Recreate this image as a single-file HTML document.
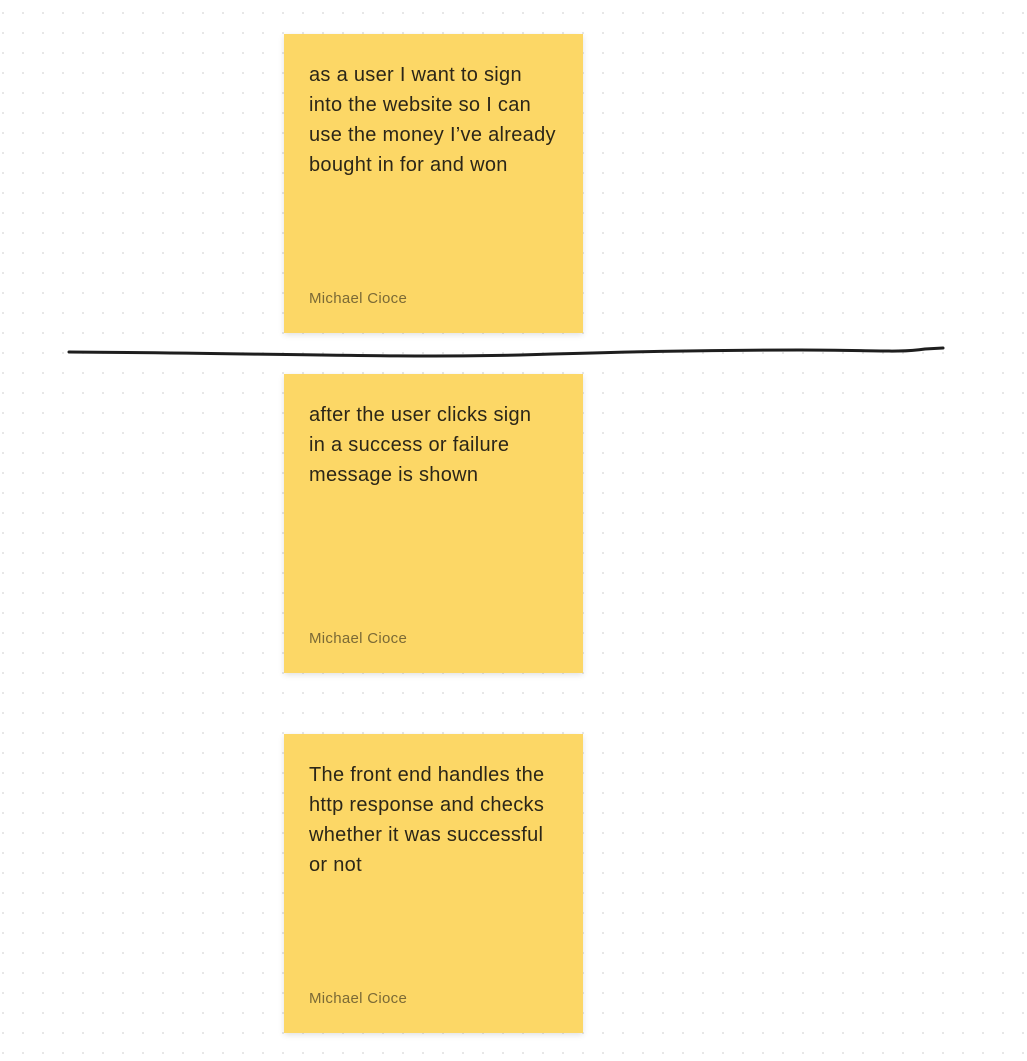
<!DOCTYPE html>
<html><head><style>
html,body{margin:0;padding:0}
body{width:1027px;height:1061px;position:relative;overflow:hidden;background-color:#fff;
background-image:radial-gradient(circle,#e0e0e0 0.8px,transparent 1.1px);
background-size:20px 20px;background-position:-7px 3px;font-family:"Liberation Sans",sans-serif}
.card{position:absolute;left:284px;width:299px;height:299px;background:#fcd766;box-shadow:0 2px 6px rgba(0,0,0,0.12)}
.t{position:absolute;left:25px;top:26px;white-space:nowrap;font-size:20px;letter-spacing:0.3px;line-height:30px;color:#2b2618}
.a{position:absolute;left:25px;top:256px;font-size:15px;letter-spacing:0.3px;color:#7b6a36}
</style></head><body>
<div class="card" style="top:34px"><div class="t">as a user I want to sign<br>into the website so I can<br>use the money I’ve already<br>bought in for and won</div><div class="a">Michael Cioce</div></div>
<div class="card" style="top:374px"><div class="t">after the user clicks sign<br>in a success or failure<br>message is shown</div><div class="a">Michael Cioce</div></div>
<div class="card" style="top:734px"><div class="t">The front end handles the<br>http response and checks<br>whether it was successful<br>or not</div><div class="a">Michael Cioce</div></div>
<svg width="1027" height="1061" style="position:absolute;left:0;top:0">
<path d="M69 352 C 250 353, 400 358, 520 355 C 620 352, 700 350, 800 350 C 870 350, 900 353, 925 349 L943 348" fill="none" stroke="#1e1e1e" stroke-width="3" stroke-linecap="round"/>
</svg>
</body></html>
